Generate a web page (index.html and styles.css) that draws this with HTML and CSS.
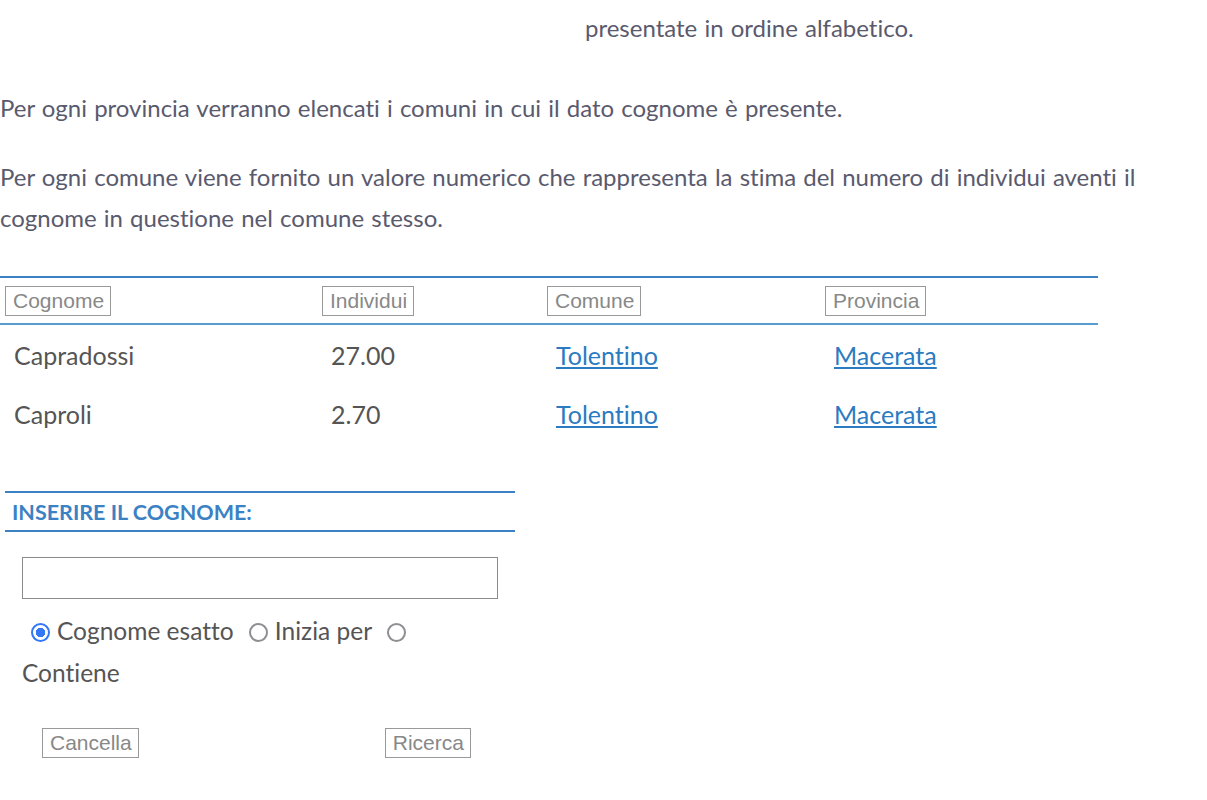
FILE: index.html
```html
<!DOCTYPE html>
<html lang="it">
<head>
    <meta charset="UTF-8">
    <meta name="viewport" content="width=device-width, initial-scale=1.0">
    <title>Cognomi - Risultati</title>
    <link rel="stylesheet" href="styles.css">
</head>
<body>

    <div class="intro">
        <p class="tail">presentate in ordine alfabetico.</p>
        <p class="first">Per ogni provincia verranno elencati i comuni in cui il dato cognome è presente.</p>
        <p>Per ogni comune viene fornito un valore numerico che rappresenta la stima del numero di individui aventi il cognome in questione nel comune stesso.</p>
    </div>

    <!-- tabella dei risultati -->
    <table class="results">
        <colgroup>
            <col class="c1">
            <col class="c2">
            <col class="c3">
            <col class="c4">
        </colgroup>
        <thead>
            <tr>
                <th><button type="button" class="sort">Cognome</button></th>
                <th><button type="button" class="sort">Individui</button></th>
                <th><button type="button" class="sort">Comune</button></th>
                <th><button type="button" class="sort">Provincia</button></th>
            </tr>
        </thead>
        <tbody>
            <tr>
                <td>Capradossi</td>
                <td>27.00</td>
                <td><a href="#">Tolentino</a></td>
                <td><a href="#">Macerata</a></td>
            </tr>
            <tr>
                <td>Caproli</td>
                <td>2.70</td>
                <td><a href="#">Tolentino</a></td>
                <td><a href="#">Macerata</a></td>
            </tr>
        </tbody>
    </table>

    <!-- form di ricerca -->
    <form class="search" onsubmit="return false">
        <h2>INSERIRE IL COGNOME:</h2>
        <div class="search-body">
            <input type="text" class="surname" name="cognome">
            <div class="modes">
                <input type="radio" name="tipo" value="esatto" checked>Cognome esatto
                <input type="radio" name="tipo" value="inizia">Inizia per
                <input type="radio" name="tipo" value="contiene">Contiene
            </div>
            <div class="actions">
                <button type="reset" class="plain">Cancella</button>
                <button type="submit" class="plain">Ricerca</button>
            </div>
        </div>
    </form>

</body>
</html>
```

FILE: styles.css
```css
body {
    margin: 0;
    font-family: Lato, "Open Sans", sans-serif;
    font-size: 24px;
    font-variant-ligatures: no-common-ligatures;
    color: #5a5a6e;
    background-color: #fff;
}

.intro p {
    margin: 0 0 28px 0;
    line-height: 41px;
    width: 1175px;
    word-spacing: 1px;
}

.intro .tail {
    margin: 7px 0 39px 0;
    padding-left: 585px;
    width: auto;
}

/* tabella risultati */
.results {
    margin-top: 38px;
    width: 1098px;
    table-layout: fixed;
    border-collapse: collapse;
    color: #555;
    font-size: 25px;
}

.results .c1 { width: 317px; }
.results .c2 { width: 225px; }
.results .c3 { width: 278px; }
.results .c4 { width: 278px; }

.results thead tr {
    border-top: 2px solid #3b82c4;
    border-bottom: 2px solid #5a9bd0;
}

.results th {
    text-align: left;
    padding: 8px 0 7px 5px;
    font-weight: normal;
    line-height: 29px;
}

.results td {
    padding: 0 0 0 14px;
    height: 59px;
    line-height: 28px;
}

.results a {
    color: #2b7bc2;
}

.sort, .plain {
    font-family: "Liberation Sans", Arial, sans-serif;
    font-size: 21px;
    color: #888;
    background-color: #fff;
    border: 1px solid #999;
    padding: 2px 6px 3px 7px;
    line-height: 23px;
    border-radius: 0;
    margin: 0;
    vertical-align: top;
}

/* form ricerca */
.search {
    margin: 48px 0 0 5px;
    width: 510px;
}

.search h2 {
    margin: 0;
    font-size: 21.5px;
    font-weight: bold;
    color: #3b82c4;
    border-top: 2px solid #3b82c4;
    border-bottom: 2px solid #3b82c4;
    padding: 7px 0 6px 7px;
    line-height: 24px;
}

.search-body {
    padding: 25px 0 0 17px;
}

.surname {
    display: block;
    box-sizing: border-box;
    width: 476px;
    height: 42px;
    margin: 0;
    border: 1px solid #8a8a8a;
    border-radius: 0;
    font-size: 20px;
}

.modes {
    margin-top: 11px;
    width: 470px;
    font-size: 24.5px;
    line-height: 42px;
    color: #555;
}

.modes input {
    appearance: none;
    -webkit-appearance: none;
    box-sizing: border-box;
    width: 19px;
    height: 19px;
    margin: 0 7px 0 9px;
    border: 2px solid #8e8e93;
    border-radius: 50%;
    vertical-align: -2px;
    background-color: #fff;
}

.modes input:checked {
    border-color: #3478f6;
    background: radial-gradient(circle, #3478f6 0 4.5px, #fff 5px);
}

.actions {
    display: flex;
    gap: 246px;
    padding: 34px 0 0 20px;
}
```
